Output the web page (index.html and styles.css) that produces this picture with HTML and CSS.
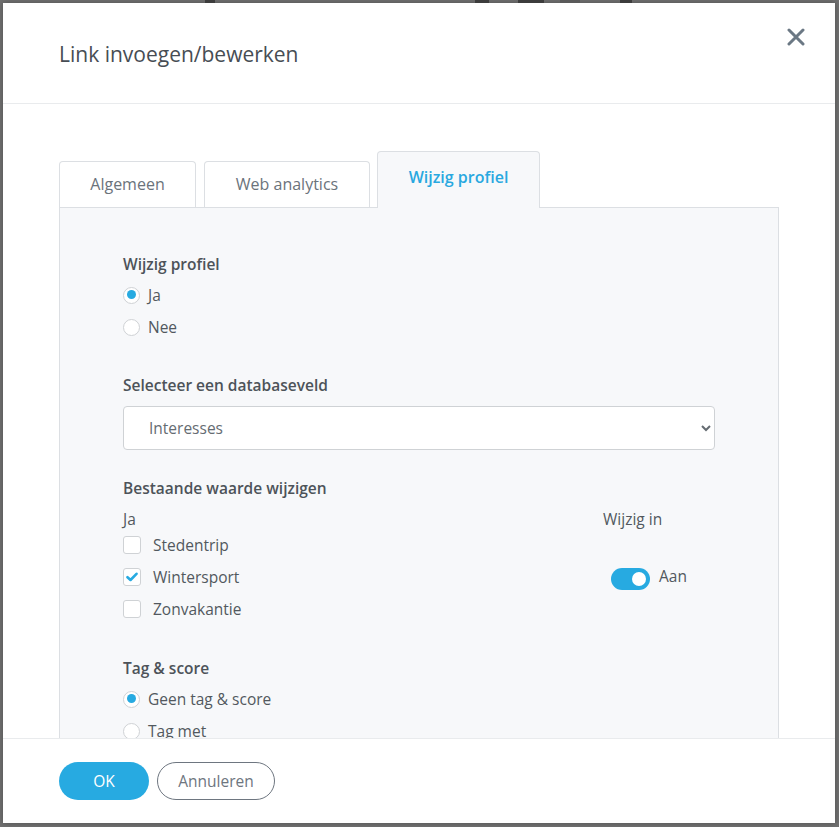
FILE: index.html
```html
<!DOCTYPE html>
<html lang="nl">
<head>
<meta charset="utf-8">
<title>Link invoegen/bewerken</title>
<link rel="stylesheet" href="styles.css">
</head>
<body>
<div class="backdrop-strip">
  <span class="bg-icon i1"></span><span class="bg-icon i2"></span><span class="bg-icon i3"></span><span class="bg-icon i4"></span><span class="bg-icon i5"></span>
</div>
<div class="dialog">
  <header class="dlg-header">
    <h1 class="dlg-title">Link invoegen/bewerken</h1>
    <button class="close-btn" aria-label="Sluiten">
      <svg width="18" height="18" viewBox="0 0 18 18"><path d="M2 2 L16 16 M16 2 L2 16" stroke="#6b7884" stroke-width="3" stroke-linecap="round"/></svg>
    </button>
  </header>
  <div class="dlg-body">
    <nav class="tabs">
      <div class="tab">Algemeen</div>
      <div class="tab tab-wide">Web analytics</div>
      <div class="tab tab-active">Wijzig profiel</div>
    </nav>
    <section class="panel">
      <div class="field-label">Wijzig profiel</div>
      <div class="group">
        <label class="radio-row"><span class="radio checked"></span>Ja</label>
        <label class="radio-row"><span class="radio"></span>Nee</label>
      </div>

      <div class="field-label mt-select">Selecteer een databaseveld</div>
      <select class="select"><option>Interesses</option></select>

      <div class="field-label mt-bestaande">Bestaande waarde wijzigen</div>
      <div class="two-col">
        <div class="col-left">
          <div class="sub-head">Ja</div>
          <label class="check-row"><span class="check"></span>Stedentrip</label>
          <label class="check-row"><span class="check checked"><svg width="12" height="10" viewBox="0 0 12 10"><path d="M1.5 5.2 L4.5 8 L10.5 1.8" fill="none" stroke="#27aae1" stroke-width="2.6" stroke-linecap="round" stroke-linejoin="round"/></svg></span>Wintersport</label>
          <label class="check-row"><span class="check"></span>Zonvakantie</label>
        </div>
        <div class="col-right">
          <div class="sub-head">Wijzig in</div>
          <div class="toggle-row"><span class="toggle"><span class="knob"></span></span><span class="toggle-text">Aan</span></div>
        </div>
      </div>

      <div class="field-label mt-tag">Tag &amp; score</div>
      <div class="group">
        <label class="radio-row"><span class="radio checked"></span>Geen tag &amp; score</label>
        <label class="radio-row"><span class="radio"></span>Tag met</label>
        <label class="radio-row"><span class="radio"></span>Score</label>
      </div>
    </section>
  </div>
  <footer class="dlg-footer">
    <button class="btn btn-primary">OK</button>
    <button class="btn btn-outline">Annuleren</button>
  </footer>
</div>
</body>
</html>
```
FILE: styles.css
```css
* { box-sizing: border-box; }
html, body { height: 100%; }
body {
  margin: 0;
  padding: 3px 4px 4px 3px;
  background: #717171;
  font-family: "Open Sans", "Liberation Sans", sans-serif;
  color: #50565c;
  overflow: hidden;
  position: relative;
}
.backdrop-strip {
  position: absolute;
  left: 0; top: 0; right: 0; height: 3px;
}
.bg-icon { position: absolute; top: 0; height: 3px; background: #3c3c3c; }
.i1 { left: 205px; width: 10px; }
.i2 { left: 475px; width: 14px; }
.i3 { left: 518px; width: 26px; }
.i4 { left: 560px; width: 20px; background: #5a5a5a; }
.i5 { left: 620px; width: 12px; }

.dialog {
  width: 832px;
  height: 820px;
  background: #fff;
  display: flex;
  flex-direction: column;
  box-shadow: 0 0 6px rgba(0,0,0,0.3);
}
.dlg-header {
  height: 101px;
  flex: none;
  border-bottom: 1px solid #e9ebed;
  display: flex;
  align-items: flex-start;
  justify-content: space-between;
  padding: 0 26px 0 56px;
}
.dlg-title {
  margin: 37px 0 0;
  font-size: 21px;
  line-height: 28px;
  font-weight: 500;
  color: #474d54;
}
.close-btn {
  margin-top: 21px;
  border: 0;
  background: none;
  padding: 0;
  width: 26px;
  height: 26px;
  display: flex;
  align-items: center;
  justify-content: center;
}
.dlg-body {
  flex: 1;
  overflow: hidden;
  padding: 46px 56px 0 56px;
}
.tabs {
  display: flex;
  align-items: flex-end;
  gap: 8px;
}
.tab {
  width: 137px;
  height: 46px;
  border: 1px solid #dcdfe3;
  border-bottom: 0;
  border-radius: 4px 4px 0 0;
  background: #fff;
  display: flex;
  align-items: center;
  justify-content: center;
  font-size: 16px;
  color: #6b737b;
  padding-bottom: 2px;
}
.tab-wide { width: 166px; }
.tab-active {
  width: 163px;
  height: 57px;
  margin-left: -1px;
  background: #f7f8fa;
  color: #29a8e0;
  font-weight: 600;
  align-items: flex-start;
  padding-top: 14px;
  position: relative;
  top: 1px;
}
.panel {
  width: 720px;
  border: 1px solid #dcdfe3;
  background: #f7f8fa;
  padding: 44px 63px 40px 63px;
  min-height: 600px;
}
.field-label {
  font-size: 15.5px;
  line-height: 24px;
  font-weight: 600;
  color: #4d5359;
}
.group { margin-top: 3px; }
.radio-row, .check-row {
  display: flex;
  align-items: center;
  height: 32px;
  font-size: 15.5px;
  color: #52585e;
}
.radio {
  width: 17px;
  height: 17px;
  border-radius: 50%;
  border: 1.5px solid #cfd2d5;
  background: #fff;
  margin-right: 8px;
  flex: none;
  position: relative;
}
.radio.checked::after {
  content: "";
  position: absolute;
  left: 2.5px; top: 2.5px;
  width: 9px; height: 9px;
  border-radius: 50%;
  background: #27aae1;
}
.check {
  width: 18px;
  height: 18px;
  border-radius: 3px;
  border: 1.5px solid #cfd2d5;
  background: #fff;
  margin-right: 12px;
  flex: none;
  display: flex;
  align-items: center;
  justify-content: center;
}
.mt-select { margin-top: 30px; }
.select {
  display: block;
  margin-top: 9px;
  width: 592px;
  height: 44px;
  border: 1px solid #cfd2d5;
  border-radius: 4px;
  background: #fff;
  padding: 0 10px 0 21px;
  font-family: "Open Sans", "Liberation Sans", sans-serif;
  font-size: 15.5px;
  color: #656c72;
}
.mt-bestaande { margin-top: 26px; }
.two-col {
  display: grid;
  grid-template-columns: 480px 1fr;
  margin-top: 9px;
}
.sub-head {
  font-size: 15.5px;
  line-height: 20px;
  height: 20px;
  color: #52585e;
}
.toggle-row {
  margin-top: 34px;
  height: 32px;
  display: flex;
  align-items: center;
  padding-left: 8px;
  gap: 9px;
  font-size: 15.5px;
  color: #52585e;
}
.toggle-text { position: relative; top: -3px; }
.toggle {
  width: 39px;
  height: 22px;
  border-radius: 11px;
  background: #27aae1;
  position: relative;
  flex: none;
}
.knob {
  position: absolute;
  right: 4px; top: 4px;
  width: 14px; height: 14px;
  border-radius: 50%;
  background: #fff;
}
.mt-tag { margin-top: 31px; }

.dlg-footer {
  height: 85px;
  flex: none;
  border-top: 1px solid #e9ebed;
  display: flex;
  align-items: flex-start;
  gap: 8px;
  padding: 23px 0 0 56px;
  background: #fff;
}
.btn {
  height: 38px;
  padding: 0;
  border-radius: 19px;
  font-family: "Open Sans", "Liberation Sans", sans-serif;
  font-size: 15.5px;
  line-height: 36px;
  cursor: pointer;
}
.btn-primary {
  width: 90px;
  border: 0;
  background: #27aae1;
  color: #fff;
  font-weight: 500;
}
.btn-outline {
  width: 118px;
  border: 1px solid #6e7680;
  background: #fff;
  color: #6e7680;
}
```
